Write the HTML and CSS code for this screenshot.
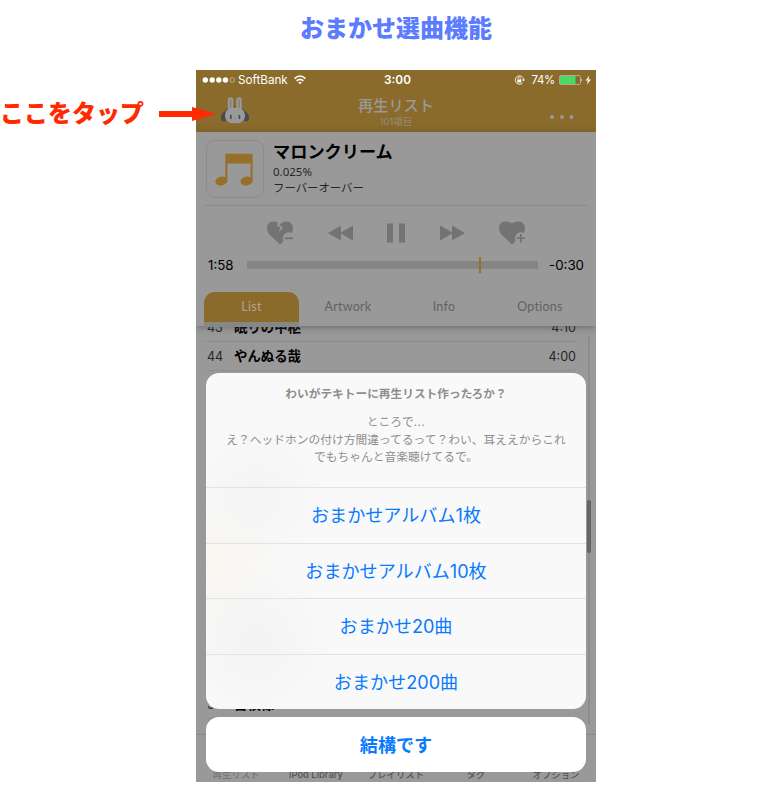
FILE: index.html
```html
<!DOCTYPE html>
<html lang="ja">
<head>
<meta charset="utf-8">
<title>おまかせ選曲機能</title>
<link rel="stylesheet" href="styles.css">
</head>
<body>
<h1 class="title"><span>おまかせ選曲機能</span></h1>
<div class="stage">
  <div class="callout">
    <span class="callout-text">ここをタップ</span>
    <svg class="arrow" width="57" height="14" viewBox="0 0 57 14"><path d="M0 4H33V0L57 7L33 14V10H0Z" fill="#ff2a00"/></svg>
  </div>
  <main class="phone">
    <header class="top">
      <div class="status">
        <div class="carrier">
          <svg width="33" height="8" viewBox="0 0 33 8"><g fill="#fff"><circle cx="3.3" cy="4" r="2.7"/><circle cx="10.2" cy="4" r="2.7"/><circle cx="16.8" cy="4" r="2.7"/><circle cx="23.4" cy="4" r="2.7"/></g><circle cx="30.2" cy="4" r="2.3" fill="none" stroke="#d5cab5" stroke-width=".7"/></svg>
          <span>SoftBank</span>
          <svg class="wifi" width="12" height="10" viewBox="0 0 12 10"><g fill="none" stroke="#fff" stroke-width="1.6"><path d="M.6 3.6Q6-1.6 11.4 3.6"/><path d="M2.6 5.9Q6 2.7 9.4 5.9"/></g><path d="M4.2 7.5Q6 6.1 7.8 7.5L6 9.3Z" fill="#fff"/></svg>
        </div>
        <b class="clock">3:00</b>
        <div class="power">
          <svg width="11" height="10" viewBox="0 0 11 10"><path d="M8.4 2A4.2 4.2 0 1 0 8.6 7.8" fill="none" stroke="#fff" stroke-width=".9"/><path d="M8.8 2.2Q9.6 3.3 9.6 5" fill="none" stroke="#fff" stroke-width=".8"/><path d="M8 4.6H11L9.5 6.5Z" fill="#fff"/><rect x="3.3" y="4.5" width="4" height="3" fill="#fff"/><path d="M4 4.6V3.6a1.3 1.3 0 0 1 2.6 0v1" fill="none" stroke="#fff" stroke-width=".8"/></svg>
          <span>74%</span>
          <svg width="33" height="10" viewBox="0 0 33 10"><rect x=".5" y=".5" width="21" height="9" rx="1.3" fill="none" stroke="#d1c3a8" stroke-width=".7"/><rect x="1" y="1" width="15.5" height="8" rx=".7" fill="#4bd964"/><path d="M22.4 3.4Q24 5 22.4 6.6Z" fill="#fff"/><path d="M30.3 .6L26.6 5.5H28.9L27.9 9.4L32 4.4H29.4Z" fill="#fff"/></svg>
        </div>
      </div>
      <div class="nav">
        <svg class="bunny" width="28" height="27" viewBox="0 0 28 27">
          <path d="M3.8 16Q6 9.5 14 9.5T24.2 16" fill="none" stroke="#555556" stroke-width="1.2"/>
          <ellipse cx="3.8" cy="19.5" rx="3.6" ry="5.2" transform="rotate(22 3.8 19.5)" fill="#484a50"/><ellipse cx="24.2" cy="19.5" rx="3.6" ry="5.2" transform="rotate(-22 24.2 19.5)" fill="#484a50"/>
          <g fill="#999"><rect x="6.8" y=".2" width="5.6" height="15" rx="2.7"/><rect x="15.2" y=".2" width="5.6" height="15" rx="2.7"/><rect x="4" y="10.7" width="20" height="15.6" rx="7.5"/></g>
          <path d="M9.6 3V10M18 3V10" stroke="#85817a" stroke-width="1.6" stroke-linecap="round"/>
          <path d="M9.8 18.6V21.2M18.4 18.6V21.2" stroke="#484a50" stroke-width="1.7" stroke-linecap="round"/><path d="M13.2 21.2L14.1 21.8L15 21.2" fill="none" stroke="#808080" stroke-width=".8"/>
        </svg>
        <div class="nav-title"><strong>再生リスト</strong><small>101項目</small></div>
        <svg class="more" width="24" height="4" viewBox="0 0 24 4"><g fill="#999"><circle cx="2" cy="2" r="2"/><circle cx="12" cy="2" r="2"/><circle cx="21.5" cy="2" r="2"/></g></svg>
      </div>
    </header>
    <section class="player">
      <div class="track">
        <div class="art"><svg width="38" height="33" viewBox="0 0 38 33"><g fill="#966f28"><path d="M10.3.8H37.6V27H35.6V10.5H12.4V27H10.3Z"/><ellipse cx="6.4" cy="28" rx="6.1" ry="4.4" transform="rotate(-12 6.4 28)"/><ellipse cx="31.6" cy="28" rx="6.1" ry="4.4" transform="rotate(-12 31.6 28)"/></g></svg></div>
        <div class="meta"><h2>マロンクリーム</h2><p>0.025%</p><p class="artist">フーバーオーバー</p></div>
      </div>
      <div class="controls">
        <svg width="28" height="26" viewBox="0 0 28 26"><path d="M14 24.5L4 15C-1.5 9 1 1.5 7.5 1.5C10.8 1.5 12.6 3 14 4.5C15.4 3 17.2 1.5 20.5 1.5C26.5 1.5 29 8 25.3 13.5Z"/><path d="M11.6 1.5L11 5.6L14.4 7.6L12.6 12.8L16.8 7.2L13.2 4.8L15.4 2Z" class="cut"/><circle cx="22.8" cy="18.2" r="6" class="cut"/><path d="M18.5 17.4H27V19.2H18.5Z"/></svg>
        <svg width="26" height="16" viewBox="0 0 26 16"><path d="M0 8L13 .5V15.5ZM12 8L25 .5V15.5Z"/></svg>
        <svg width="18" height="20" viewBox="0 0 18 20"><path d="M0 .5H6V19.5H0ZM12 .5H18V19.5H12Z"/></svg>
        <svg width="26" height="16" viewBox="0 0 26 16"><path d="M26 8L13 .5V15.5ZM14 8L1 .5V15.5Z"/></svg>
        <svg width="28" height="26" viewBox="0 0 28 26"><path d="M14 24.5L4 15C-1.5 9 1 1.5 7.5 1.5C10.8 1.5 12.6 2.4 14 3.4C15.4 2.4 17.2 1.5 20.5 1.5C26.5 1.5 29 8 25.3 13.5Z"/><circle cx="22.8" cy="18.2" r="6" class="cut"/><path d="M18.5 17.3H22V14H23.8V17.3H27V19.1H23.8V22.4H22V19.1H18.5Z"/></svg>
      </div>
      <div class="progress"><span>1:58</span><div class="bar"><i></i></div><span>-0:30</span></div>
      <nav class="tabs"><span class="active">List</span><span>Artwork</span><span>Info</span><span>Options</span></nav>
    </section>
    <section class="list">
      <div class="row first"><span>43</span><b>眠りの中枢</b><span>4:10</span></div>
      <div class="row"><span>44</span><b>やんぬる哉</b><span>4:00</span></div>
      <div class="filler"></div>
      <div class="row"><span>56</span><b>首横様</b><span></span></div>
      <div class="index"></div><div class="thumb"></div>
    </section>
    <footer class="bottom"><span class="dim">再生リスト</span><span>iPod Library</span><span>プレイリスト</span><span>タグ</span><span>オプション</span></footer>
    <div class="overlay">
      <div class="sheet">
        <div class="message"><strong>わいがテキトーに再生リスト作ったろか？</strong><p>ところで<span class="dots">...</span><br>え？ヘッドホンの付け方間違ってるって？わい、耳ええからこれ<br>でもちゃんと音楽聴けてるで。</p></div>
        <button>おまかせアルバム1枚</button><button>おまかせアルバム10枚</button><button>おまかせ20曲</button><button>おまかせ200曲</button>
      </div>
      <button class="cancel">結構です</button>
    </div>
  </main>
</div>
</body>
</html>
```
FILE: styles.css
```css
* { box-sizing: border-box; }
body { margin: 0; width: 780px; height: 799px; overflow: hidden; background: #fff; font-family: "Inter", "Noto Sans CJK JP", sans-serif; color: #000; }
svg { display: block; flex: none; }
h1, h2, p { margin: 0; }
.title { height: 70px; padding: 9px 0 0 300px; color: #5c7cff; font: 900 24px/36px "Noto Sans CJK JP", sans-serif; white-space: nowrap; }
.stage { display: grid; grid-template-columns: 196px 400px; height: 712px; }
.callout { display: flex; align-items: center; height: 30px; margin-top: 29px; white-space: nowrap; position: relative; z-index: 2; width: 216px; }
.callout-text { width: 159px; padding-bottom: 4px; font: 900 24px/30px "Noto Sans CJK JP", sans-serif; color: #ff2a00; }
.phone { position: relative; width: 400px; height: 712px; overflow: hidden; background: #999; display: flex; flex-direction: column; }
.top { height: 62px; background: #8a6b2b; flex: none; }
.status { height: 20px; display: grid; grid-template-columns: 1fr auto 1fr; align-items: center; color: #fff; }
.carrier { display: flex; align-items: center; padding-left: 6px; gap: 3px; font-size: 11.7px; }
.wifi { margin-left: 3px; }
.clock { padding-left: 3px; font-size: 11.8px; font-weight: 600; }
.power { display: flex; justify-content: flex-end; align-items: center; padding-right: 4px; gap: 4px; font-size: 11.4px; }
.power span { margin-left: 3px; letter-spacing: -.3px; }
.nav { height: 42px; display: grid; grid-template-columns: 1fr auto 1fr; align-items: start; color: #999; }
.bunny { margin: 7px 0 0 25px; }
.nav-title { display: flex; flex-direction: column; align-items: center; padding-top: 3px; }
.nav-title strong { font: 500 15.2px/22px "Noto Sans CJK JP", sans-serif; }
.nav-title small { margin-top: 1px; font-size: 9.5px; line-height: 11px; font-weight: 300; }
.more { justify-self: end; margin: 25px 22px 0 0; }
.player { height: 194px; position: relative; z-index: 1; background: #999; box-shadow: 0 1px 7px #4449; flex: none; }
.track { height: 74px; margin: 0 8px; padding: 8px 2px 0; display: flex; gap: 9px; border-bottom: 1px solid #8c8c8c; }
.art { width: 58px; height: 58px; border: 1px solid #8c8c8c; border-radius: 9px; padding-right: 3px; display: grid; place-items: center; }
.meta { margin-top: -1px; }
.meta h2 { font: 700 17.2px/24px "Noto Sans CJK JP", sans-serif; }
.meta p { margin-top: 1px; color: #262626; font: 11.5px/16px "Noto Sans", "Noto Sans CJK JP", sans-serif; }
.meta .artist { margin: 0; font: 11.4px/15px "Noto Sans CJK JP", sans-serif; }
.controls { height: 54px; padding: 0 70px; display: flex; justify-content: space-between; align-items: center; fill: #737373; }
.cut { fill: #999; }
.progress { display: flex; align-items: center; height: 14px; margin-top: -2px; padding: 0 12px; font-size: 13.3px; justify-content: space-between; }
.bar { width: 291px; height: 8px; background: #858585; display: flex; align-items: center; justify-content: flex-end; margin-left: 2px; }
.bar i { width: 2px; height: 16px; margin-right: 57px; background: #9b7023; }
.tabs { margin: 20px 8px 0; display: grid; grid-template-columns: repeat(4, 1fr); height: 34px; font: 12.5px/30px Lato, sans-serif; letter-spacing: .25px; text-align: center; color: #626262; }
.tabs .active { height: 30px; margin-right: 1px; border-radius: 11px 11px 0 0; background: #8a6b2b; color: #b1a58f; box-shadow: 0 5px 0 #878787; }
.tabs span:nth-child(n+2) { height: 30px; }
.list { height: 408px; overflow: hidden; position: relative; flex: none; }
.row { height: 29px; margin: 0 20px 0 10px; padding-left: 1px; display: grid; grid-template-columns: 27px 1fr auto; border-bottom: 1px solid #8c8c8c; font-size: 12.5px; line-height: 29px; color: #262626; }
.row b { font: 700 13.4px/27px "Noto Sans CJK JP", sans-serif; color: #000; }
.first { margin-top: -13px; }
.filler { height: 319px; }
.index { position: absolute; right: 6px; top: 10px; width: 2px; height: 388px; background: #8d8d8d; }
.thumb { position: absolute; right: 5px; top: 174px; width: 4px; height: 53px; border-radius: 2px; background: #666; }
.bottom { height: 48px; border-top: 1px solid #858585; display: grid; grid-template-columns: repeat(5, 1fr); padding-top: 33px; text-align: center; font: 500 9.4px/13px "Inter", "Noto Sans CJK JP", sans-serif; color: #555; flex: none; }
.dim { color: #777; }
.overlay { position: absolute; left: 10px; top: 303px; width: 380px; display: flex; flex-direction: column; gap: 8px; }
.sheet { height: 336px; border-radius: 13px; overflow: hidden; background: radial-gradient(circle at 50px 120px, #f4f4f4 0, #f4f4f400 75px), radial-gradient(circle at 50px 270px, #f3f3f3 0, #f3f3f300 80px), radial-gradient(circle at 0 190px, #f8f6f0 0, #f8f6f000 80px), #f9f9f9; }
.message { height: 114px; padding-top: 10px; text-align: center; color: #8e8e8e; }
.message strong { display: block; font: 700 11.7px/20px "Noto Sans CJK JP", sans-serif; }
.message p { margin-top: 9px; font: 11.75px/17.5px "Noto Sans CJK JP", sans-serif; white-space: nowrap; }
.dots { letter-spacing: .6px; }
button { display: block; width: 100%; height: 55.5px; padding: 0; border: 0; border-top: 1px solid #e3e3e3; background: none; color: #087aff; font: 400 18.1px/54px "Inter", "Noto Sans CJK JP", sans-serif; }
.cancel { height: 55px; border: 0; border-radius: 13px; background: #fff; font-weight: 700; }
```
